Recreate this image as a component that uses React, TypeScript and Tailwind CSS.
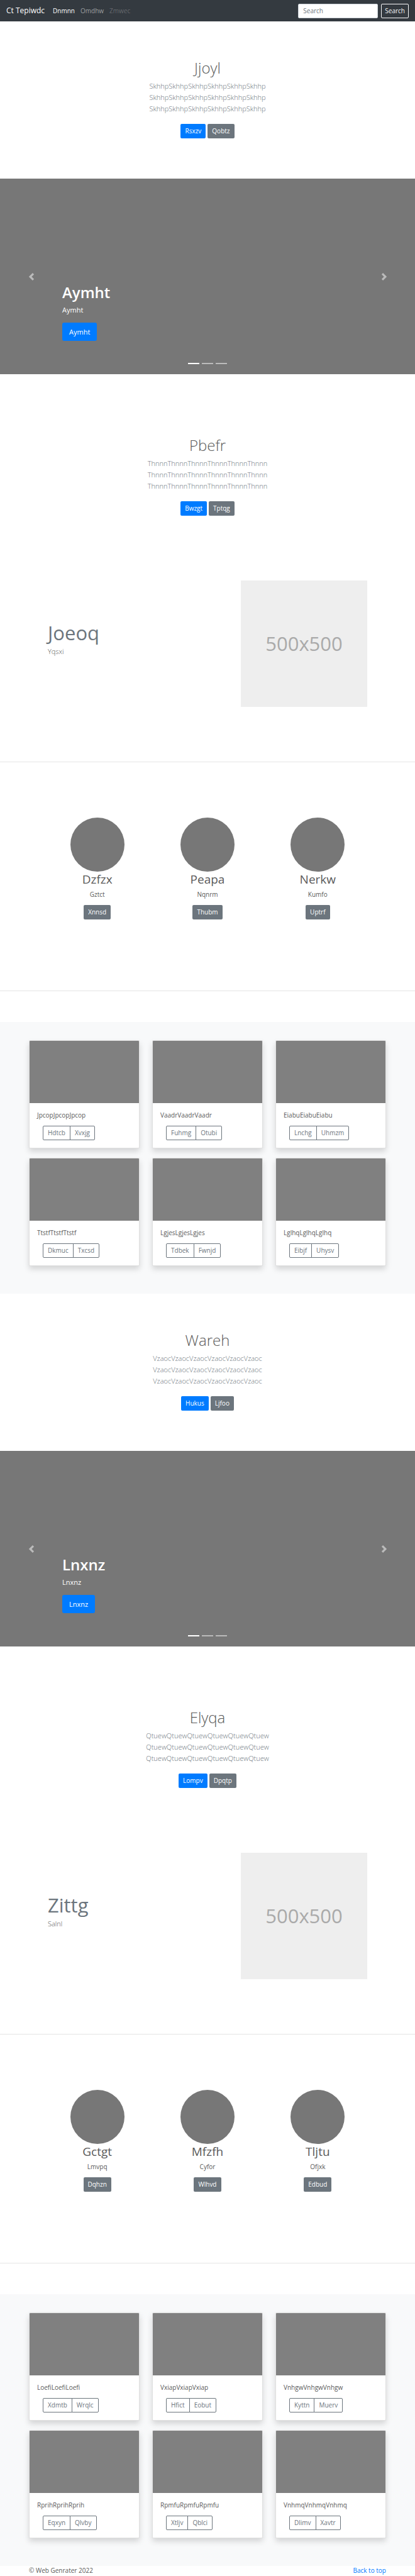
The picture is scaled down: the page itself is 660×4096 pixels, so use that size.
type HeroData = { title: string; word: string; primary: string; secondary: string };
type CardData = { text: string; first: string; second: string };
type PersonData = { name: string; role: string; action: string };
type BlockData = {
  hero: HeroData;
  slide: string;
  secondHero: HeroData;
  feature: { title: string; text: string };
  people: PersonData[];
  cards: CardData[];
};

const blocks: BlockData[] = [
  {
    hero: { title: "Jjoyl", word: "Skhhp", primary: "Rsxzv", secondary: "Qobtz" },
    slide: "Aymht",
    secondHero: { title: "Pbefr", word: "Thnnn", primary: "Bwzgt", secondary: "Tptqg" },
    feature: { title: "Joeoq", text: "Yqsxi" },
    people: [
      { name: "Dzfzx", role: "Gztct", action: "Xnnsd" },
      { name: "Peapa", role: "Nqnrm", action: "Thubm" },
      { name: "Nerkw", role: "Kumfo", action: "Uptrf" },
    ],
    cards: [
      { text: "JpcopJpcopJpcop", first: "Hdtcb", second: "Xvxjg" },
      { text: "VaadrVaadrVaadr", first: "Fuhmg", second: "Otubi" },
      { text: "EiabuEiabuEiabu", first: "Lnchg", second: "Uhmzm" },
      { text: "TtstfTtstfTtstf", first: "Dkmuc", second: "Txcsd" },
      { text: "LgjesLgjesLgjes", first: "Tdbek", second: "Fwnjd" },
      { text: "LglhqLglhqLglhq", first: "Eibjf", second: "Uhysv" },
    ],
  },
  {
    hero: { title: "Wareh", word: "Vzaoc", primary: "Hukus", secondary: "Ljfoo" },
    slide: "Lnxnz",
    secondHero: { title: "Elyqa", word: "Qtuew", primary: "Lompv", secondary: "Dpqtp" },
    feature: { title: "Zittg", text: "Salnl" },
    people: [
      { name: "Gctgt", role: "Lmvpq", action: "Dqhzn" },
      { name: "Mfzfh", role: "Cyfor", action: "Wlhvd" },
      { name: "Tljtu", role: "Ofjxk", action: "Edbud" },
    ],
    cards: [
      { text: "LoefiLoefiLoefi", first: "Xdmtb", second: "Wrqlc" },
      { text: "VxiapVxiapVxiap", first: "Hfict", second: "Eobut" },
      { text: "VnhgwVnhgwVnhgw", first: "Kyttn", second: "Muerv" },
      { text: "RprihRprihRprih", first: "Eqxyn", second: "Qlvby" },
      { text: "RpmfuRpmfuRpmfu", first: "Xtljv", second: "Qblci" },
      { text: "VnhmqVnhmqVnhmq", first: "Dlimv", second: "Xavtr" },
    ],
  },
];

function Navbar() {
  return (
    <nav className="flex h-[34px] items-center bg-[#343a40] px-2.5">
      <a href="#top" className="text-[12px] leading-[18px] text-white">
        Ct Tepiwdc
      </a>
      <div className="ml-[13px] flex gap-[9px] text-[10px] leading-[15px]">
        <a href="#top" className="text-white">Dnmnn</a>
        <a href="#top" className="text-white/50">Omdhw</a>
        <a href="#top" className="text-white/25">Zmwec</a>
      </div>
      <form className="ml-auto flex gap-[5px]" onSubmit={(e) => e.preventDefault()}>
        <input
          type="search"
          aria-label="Search"
          placeholder="Search"
          className="h-[23px] w-[127px] rounded-[2px] border border-[#ced4da] bg-white px-[7px] text-[10px] leading-[15px] text-[#495057] placeholder:text-[#6c757d]"
        />
        <button
          type="submit"
          className="h-[23px] rounded-[2px] border border-[#f8f9fa] px-[5px] text-[10px] leading-[15px] text-[#f8f9fa]"
        >
          Search
        </button>
      </form>
    </nav>
  );
}

function SolidButton({ label, primary = false }: { label: string; primary?: boolean }) {
  const base = "h-[23px] rounded-[2px] px-[7px] text-[10px] leading-[15px] text-white ";
  return (
    <button type="button" className={base + (primary ? "bg-[#007bff]" : "bg-[#6c757d]")}>
      {label}
    </button>
  );
}

function Hero({ hero }: { hero: HeroData }) {
  const line = hero.word.repeat(6);
  return (
    <section className="flex flex-col items-center px-3 pt-[59px] pb-16 text-center">
      <h1 className="text-[24px] leading-[29px] font-light">{hero.title}</h1>
      <p className="mt-[6px] text-[11px] leading-[18px] font-light text-[#6c757d]">
        {line}
        <br />
        {line}
        <br />
        {line}
      </p>
      <div className="mt-[15px] flex gap-[3px]">
        <SolidButton label={hero.primary} primary />
        <SolidButton label={hero.secondary} />
      </div>
    </section>
  );
}

function Carousel({ text }: { text: string }) {
  return (
    <section className="relative mb-[39px] bg-[#777777] px-[15%] pt-[166px] pb-[53px] text-white">
      <h1 className="text-[24px] leading-[29px] font-semibold">{text}</h1>
      <p className="mt-[5px] text-[11px] leading-[18px]">{text}</p>
      <button
        type="button"
        className="mt-[11px] h-[29px] rounded-[3px] bg-[#007bff] px-[11px] text-[11px] leading-[18px]"
      >
        {text}
      </button>
      <button
        type="button"
        aria-label="Previous"
        className="absolute inset-y-0 left-0 flex w-[15%] items-center justify-center opacity-50"
      >
        <svg viewBox="0 0 8 8" className="size-3" fill="#fff">
          <path d="M5.25 0l-4 4 4 4 1.5-1.5-2.5-2.5 2.5-2.5-1.5-1.5z" />
        </svg>
      </button>
      <button
        type="button"
        aria-label="Next"
        className="absolute inset-y-0 right-0 flex w-[15%] items-center justify-center opacity-50"
      >
        <svg viewBox="0 0 8 8" className="size-3" fill="#fff">
          <path d="M2.75 0l-1.5 1.5 2.5 2.5-2.5 2.5 1.5 1.5 4-4-4-4z" />
        </svg>
      </button>
      <div className="absolute inset-x-0 bottom-4 flex justify-center gap-1">
        <span className="h-0.5 w-[18px] bg-white" />
        <span className="h-0.5 w-[18px] bg-white/50" />
        <span className="h-0.5 w-[18px] bg-white/50" />
      </div>
    </section>
  );
}

function Feature({ title, text }: { title: string; text: string }) {
  return (
    <section className="flex justify-between border-b border-[#e5e5e5] px-[76px] pt-[39px] pb-[87px]">
      <div className="pt-[68px]">
        <h2 className="text-[31px] leading-[31px] text-[#6c757d]">{title}</h2>
        <p className="mt-[5px] text-[11px] leading-[18px] font-light">{text}</p>
      </div>
      <div className="flex size-[201px] items-center justify-center bg-[#eeeeee] text-[31px] text-[#aaaaaa]">
        500x500
      </div>
    </section>
  );
}

function People({ people }: { people: PersonData[] }) {
  return (
    <section className="grid grid-cols-3 border-b border-[#e5e5e5] px-[67px] pt-[88px] pb-[113px]">
      {people.map((p) => (
        <div key={p.name} className="flex flex-col items-center">
          <div className="size-[86px] rounded-full bg-[#777777]" />
          <h2 className="text-[19px] leading-[24px]">{p.name}</h2>
          <p className="mt-[5px] mb-[9px] text-[10px] leading-[15px]">{p.role}</p>
          <SolidButton label={p.action} />
        </div>
      ))}
    </section>
  );
}

function Album({ cards }: { cards: CardData[] }) {
  return (
    <section className="mt-[49px] grid grid-cols-3 gap-x-5 gap-y-[15px] bg-[#f8f9fa] px-[46px] pt-[29px] pb-11">
      {cards.map((c) => (
        <article
          key={c.text}
          className="overflow-hidden rounded-[2px] border border-black/12 bg-white shadow-[0_5px_10px_rgba(0,0,0,0.15)]"
        >
          <div className="h-[99px] bg-[#808080]" />
          <div className="p-3">
            <p className="text-[10px] leading-[15px]">{c.text}</p>
            <div className="mt-[9px] ml-[9px] flex text-[10px] leading-[15px] text-[#6c757d]">
              <button type="button" className="h-[23px] rounded-l-[2px] border border-[#6c757d] px-[7px]">
                {c.first}
              </button>
              <button type="button" className="-ml-px h-[23px] rounded-r-[2px] border border-[#6c757d] px-[7px]">
                {c.second}
              </button>
            </div>
          </div>
        </article>
      ))}
    </section>
  );
}

export default function App() {
  return (
    <div id="top" className="bg-white font-['Open_Sans','Noto_Sans',sans-serif] text-[#5a5a5a]">
      <Navbar />
      <main>
        {blocks.map((b) => (
          <div key={b.slide}>
            <Hero hero={b.hero} />
            <Carousel text={b.slide} />
            <Hero hero={b.secondHero} />
            <Feature title={b.feature.title} text={b.feature.text} />
            <People people={b.people} />
            <Album cards={b.cards} />
          </div>
        ))}
      </main>
      <footer className="flex justify-between px-[46px] text-[10px] leading-[14px]">
        <p>© Web Genrater 2022</p>
        <a href="#top" className="text-[#007bff]">Back to top</a>
      </footer>
    </div>
  );
}
